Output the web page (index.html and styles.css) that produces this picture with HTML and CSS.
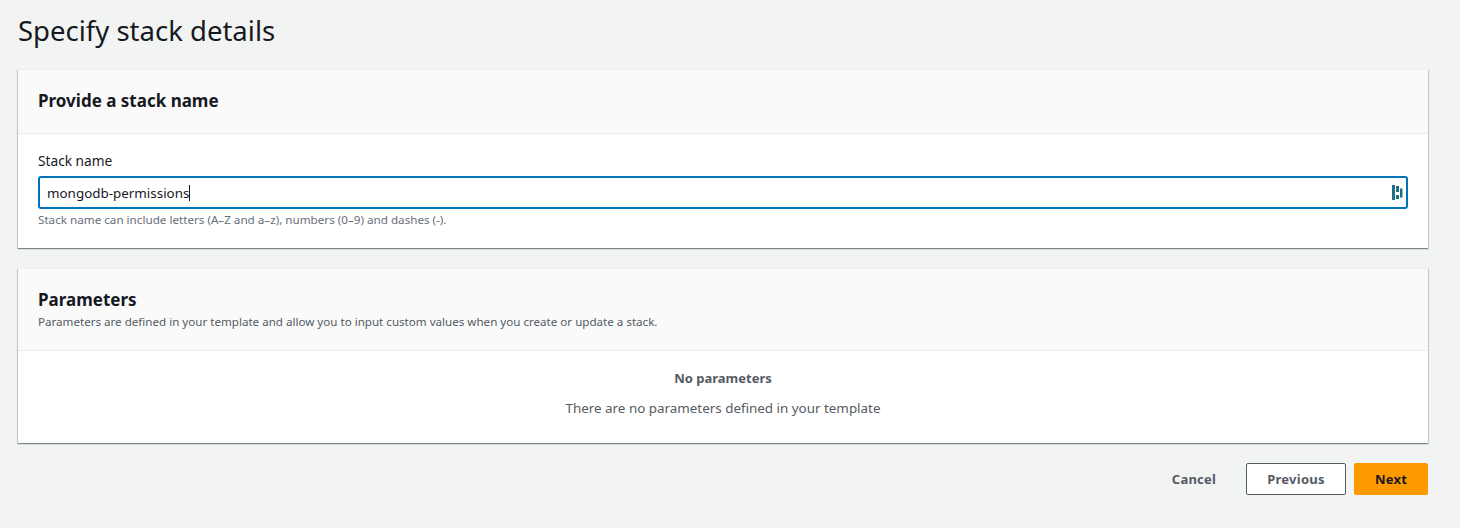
FILE: index.html
```html
<!DOCTYPE html>
<html lang="en">
<head>
<meta charset="utf-8">
<title>Specify stack details</title>
<link rel="stylesheet" href="styles.css">
</head>
<body>
<main class="page">
  <h1 class="page-title">Specify stack details</h1>
  <section class="card">
    <header class="card-header card-header-name">
      <h2 class="card-title">Provide a stack name</h2>
    </header>
    <div class="card-body-form">
      <label class="field-label">Stack name</label>
      <div class="input">
        <span class="input-value">mongodb-permissions</span><span class="caret"></span>
        <svg class="input-icon" width="11" height="15" viewBox="0 0 11 15">
          <rect x="0" y="0" width="3" height="15" fill="#1f6f86"/>
          <rect x="4" y="1" width="3" height="6" fill="#1f6f86"/>
          <rect x="4" y="10" width="3" height="4" fill="#1f6f86"/>
          <rect x="8" y="3.5" width="2.5" height="9" fill="#1f6f86"/>
        </svg>
      </div>
      <p class="hint">Stack name can include letters (A–Z and a–z), numbers (0–9) and dashes (-).</p>
    </div>
  </section>
  <section class="card">
    <header class="card-header card-header-params">
      <h2 class="card-title">Parameters</h2>
      <p class="card-desc">Parameters are defined in your template and allow you to input custom values when you create or update a stack.</p>
    </header>
    <div class="card-body-empty">
      <p class="empty-title">No parameters</p>
      <p class="empty-text">There are no parameters defined in your template</p>
    </div>
  </section>
  <footer class="actions">
    <button class="btn btn-link">Cancel</button>
    <button class="btn btn-normal">Previous</button>
    <button class="btn btn-primary">Next</button>
  </footer>
</main>
</body>
</html>
```
FILE: styles.css
```css
* { box-sizing: border-box; }
html, body { margin: 0; padding: 0; }
body {
  background: #f2f3f3;
  color: #16191f;
  font-family: "Noto Sans", "Open Sans", sans-serif;
  height: 528px;
  overflow: hidden;
}
.page { padding: 11px 32px 0 18px; }
.page-title {
  margin: 0 0 19px;
  font-size: 27.5px;
  line-height: 39px;
  font-weight: 400;
  color: #16191f;
}
.card {
  background: #fff;
  margin-bottom: 20px;
  box-shadow: 0 1px 1px 0 rgba(0, 28, 36, 0.3), 1px 1px 1px 0 rgba(0, 28, 36, 0.15), -1px 1px 1px 0 rgba(0, 28, 36, 0.15);
  border-top: 1px solid #eaeded;
}
.card-header {
  background: #fafafa;
  border-bottom: 1px solid #eaeded;
  padding: 0 20px;
}
.card-header-name { height: 64px; padding-top: 19px; }
.card-header-params { height: 82px; padding-top: 19px; }
.card-title {
  margin: 0;
  font-size: 17px;
  line-height: 24px;
  font-weight: 700;
  color: #16191f;
}
.card-desc {
  margin: 2px 0 0;
  font-size: 11.6px;
  line-height: 16px;
  color: #545b64;
}
.card-body-form { padding: 18px 20px 0; height: 114px; }
.field-label {
  display: block;
  font-size: 13.7px;
  line-height: 18px;
  color: #16191f;
}
.input {
  display: flex;
  align-items: center;
  height: 33px;
  margin-top: 6px;
  padding: 0 3px 0 7px;
  border: 2px solid #0073bb;
  border-radius: 3px;
  background: #fff;
}
.input-value { font-size: 13.4px; color: #16191f; }
.caret { width: 1px; height: 16px; background: #16191f; }
.input-icon { margin-left: auto; }
.hint {
  margin: 3px 0 0;
  font-size: 11.67px;
  line-height: 16px;
  color: #687078;
}
.card-body-empty { height: 92px; padding-top: 17px; text-align: center; color: #545b64; }
.empty-title {
  margin: 0;
  font-size: 13px;
  line-height: 20px;
  font-weight: 700;
}
.empty-text {
  margin: 11px 0 0;
  font-size: 13.4px;
  line-height: 18px;
}
.actions {
  display: flex;
  justify-content: flex-end;
  align-items: center;
  gap: 8px;
}
.btn {
  height: 32px;
  font-family: inherit;
  font-size: 13px;
  font-weight: 700;
  border-radius: 2px;
  letter-spacing: 0.25px;
}
.btn-link { background: none; border: 0; color: #545b64; width: 88px; margin-right: 0; }
.btn-normal { width: 100px; background: #fff; border: 1px solid #545b64; color: #545b64; }
.btn-primary { width: 74px; background: #ff9900; border: 1px solid #ff9900; color: #16191f; }
```
